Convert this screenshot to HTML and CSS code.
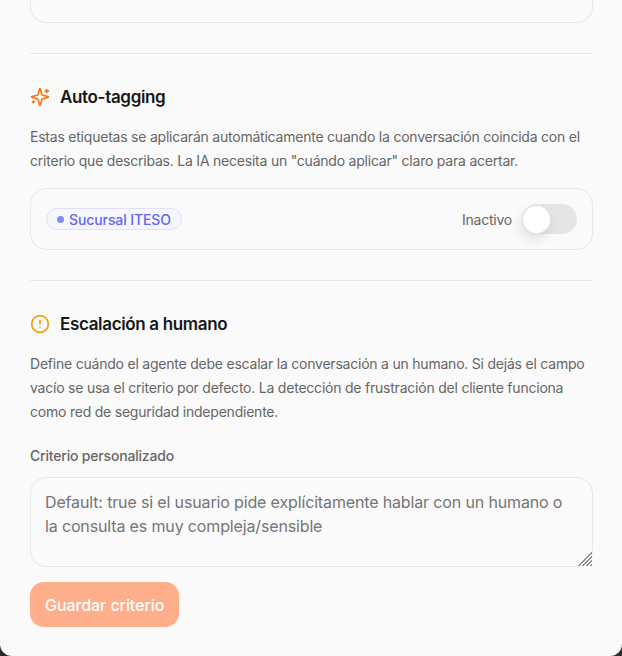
FILE: index.html
```html
<!DOCTYPE html>
<html lang="es">
<head>
<meta charset="utf-8">
<title>Agente</title>
<link rel="stylesheet" href="styles.css">
</head>
<body>
<main class="panel">
  <div class="card-stub"></div>
  <hr class="divider">
  <section class="section">
    <h2 class="heading">
      <svg class="icon" viewBox="0 0 24 24" fill="none" stroke="#f97316" stroke-width="2" stroke-linecap="round" stroke-linejoin="round"><path d="M9.94 15.5A2 2 0 0 0 8.5 14.06l-6.13-1.58a.5.5 0 0 1 0-.96L8.5 9.94A2 2 0 0 0 9.94 8.5l1.58-6.13a.5.5 0 0 1 .96 0L14.06 8.5A2 2 0 0 0 15.5 9.94l6.13 1.58a.5.5 0 0 1 0 .96L15.5 14.06a2 2 0 0 0-1.44 1.44l-1.58 6.13a.5.5 0 0 1-.96 0z"/><path d="M20 3v4"/><path d="M22 5h-4"/><path d="M4 17v2"/><path d="M5 18H3"/></svg>
      Auto-tagging
    </h2>
    <p class="desc">Estas etiquetas se aplicarán automáticamente cuando la conversación coincida con el criterio que describas. La IA necesita un "cuándo aplicar" claro para acertar.</p>
    <div class="tag-card">
      <span class="tag"><span class="tag-dot"></span>Sucursal ITESO</span>
      <div class="status">
        <span class="status-label">Inactivo</span>
        <span class="toggle"><span class="knob"></span></span>
      </div>
    </div>
  </section>
  <hr class="divider divider-second">
  <section class="section">
    <h2 class="heading">
      <svg class="icon" viewBox="0 0 24 24" fill="none" stroke="#f59e0b" stroke-width="2" stroke-linecap="round" stroke-linejoin="round"><circle cx="12" cy="12" r="10"/><path d="M12 8v4"/><path d="M12 16h.01"/></svg>
      Escalación a humano
    </h2>
    <p class="desc">Define cuándo el agente debe escalar la conversación a un humano. Si dejás el campo vacío se usa el criterio por defecto. La detección de frustración del cliente funciona como red de seguridad independiente.</p>
    <label class="field-label" for="criterio">Criterio personalizado</label>
    <textarea class="textarea" id="criterio" placeholder="Default: true si el usuario pide explícitamente hablar con un humano o la consulta es muy compleja/sensible"></textarea>
    <button class="save" type="button">Guardar criterio</button>
  </section>
</main>
</body>
</html>
```
FILE: styles.css
```css
* { box-sizing: border-box; }
html, body { margin: 0; height: 100%; }
body {
  background: #2b2b2b;
  font-family: Inter, "Liberation Sans", sans-serif;
  overflow: hidden;
}
.panel {
  height: 656px;
  padding: 0 29px 0 30px;
  background: #fafafa;
  border-radius: 0 0 12px 12px;
  overflow: hidden;
}
.card-stub {
  height: 23px;
  border: 1px solid #e8e8e8;
  border-top: 0;
  border-radius: 0 0 16px 16px;
}
.divider {
  height: 1px;
  margin: 30px 0 0;
  border: 0;
  background: #e8e8e8;
}
.divider-second { margin-top: 30px; }
.section { padding-top: 31px; }
.heading {
  display: flex;
  align-items: center;
  gap: 10px;
  margin: 0;
  height: 24px;
  font-size: 17px;
  font-weight: 600;
  line-height: 24px;
  letter-spacing: -0.34px;
  color: #171717;
}
.icon { width: 20px; height: 20px; flex: none; }
.desc {
  margin: 16px 0 0;
  font-size: 14px;
  line-height: 24px;
  letter-spacing: -0.22px;
  color: #666;
}
.tag-card {
  display: flex;
  align-items: center;
  justify-content: space-between;
  height: 62px;
  margin-top: 15px;
  padding: 0 15px;
  border: 1px solid #e8e8e8;
  border-radius: 16px;
}
.tag {
  display: inline-flex;
  align-items: center;
  gap: 5px;
  height: 22px;
  padding: 0 10px;
  border: 1px solid #e0e0fb;
  border-radius: 11px;
  background: #f6f6fe;
  font-size: 14px;
  font-weight: 500;
  letter-spacing: -0.1px;
  color: #6366f1;
}
.tag-dot {
  width: 7px;
  height: 7px;
  border-radius: 50%;
  background: #818cf8;
}
.status { display: flex; align-items: center; gap: 10px; }
.status-label { font-size: 14px; letter-spacing: -0.22px; color: #666; }
.toggle {
  display: block;
  width: 55px;
  height: 30px;
  border-radius: 15px;
  background: #e5e5e5;
}
.knob {
  display: block;
  width: 27px;
  height: 27px;
  margin: 2px 1px;
  border-radius: 50%;
  background: #fff;
  box-shadow: 0 0 0 1px #e2e2ea, -2px 6px 12px rgba(0, 0, 0, 0.12);
}
.field-label {
  display: block;
  margin-top: 20px;
  font-size: 14px;
  font-weight: 500;
  line-height: 24px;
  letter-spacing: -0.19px;
  color: #666;
}
.textarea {
  display: block;
  width: 100%;
  height: 90px;
  margin-top: 9px;
  padding: 12px 14px;
  border: 1px solid #e8e8e8;
  border-radius: 16px;
  background: #fafafa;
  font: 16px/24px Inter, "Liberation Sans", sans-serif;
  letter-spacing: -0.145px;
  color: #171717;
  outline: 0;
}
.textarea::placeholder { color: #757575; opacity: 1; }
.textarea::-webkit-resizer {
  background:
    linear-gradient(135deg, #fafafa 52%, transparent 52%),
    repeating-linear-gradient(135deg, #8f8f8f 0 1px, transparent 1px 2.8px);
}
.save {
  display: block;
  height: 45px;
  margin-top: 15px;
  padding: 0 15px;
  border: 0;
  border-radius: 14px;
  background: #ffae8b;
  font: 500 16px Inter, "Liberation Sans", sans-serif;
  letter-spacing: -0.07px;
  color: #fff;
}
```
